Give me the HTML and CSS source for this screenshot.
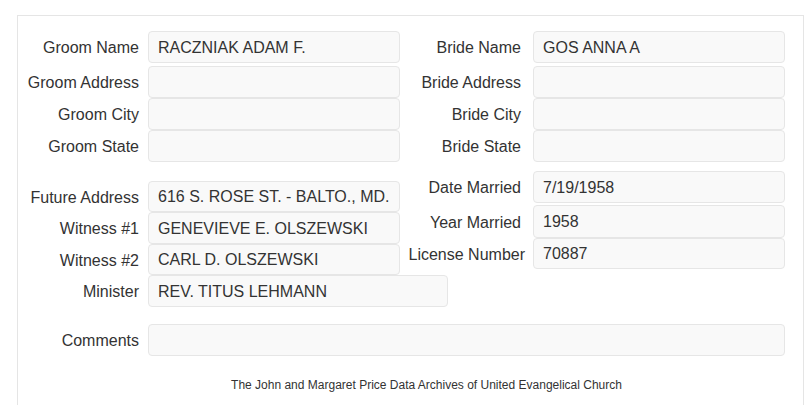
FILE: index.html
```html
<!DOCTYPE html>
<html lang="en">
<head>
<meta charset="utf-8">
<title>Marriage Record</title>
<link rel="stylesheet" href="styles.css">
</head>
<body>
<div class="sheet">
  <div class="section top">
    <div class="col col-left">
      <div class="row first"><div class="label">Groom Name</div><div class="field">RACZNIAK ADAM F.</div></div>
      <div class="row"><div class="label">Groom Address</div><div class="field"></div></div>
      <div class="row"><div class="label">Groom City</div><div class="field"></div></div>
      <div class="row"><div class="label">Groom State</div><div class="field"></div></div>
    </div>
    <div class="col col-right">
      <div class="row first"><div class="label">Bride Name</div><div class="field">GOS ANNA A</div></div>
      <div class="row"><div class="label">Bride Address</div><div class="field"></div></div>
      <div class="row"><div class="label">Bride City</div><div class="field"></div></div>
      <div class="row"><div class="label">Bride State</div><div class="field"></div></div>
    </div>
  </div>
  <div class="section mid">
    <div class="col col-left mid-left">
      <div class="row h31"><div class="label">Future Address</div><div class="field">616 S. ROSE ST. - BALTO., MD.</div></div>
      <div class="row h32"><div class="label">Witness #1</div><div class="field">GENEVIEVE E. OLSZEWSKI</div></div>
      <div class="row h31"><div class="label">Witness #2</div><div class="field">CARL D. OLSZEWSKI</div></div>
      <div class="row h32"><div class="label">Minister</div><div class="field wide">REV. TITUS LEHMANN</div></div>
    </div>
    <div class="col col-right mid-right">
      <div class="row h32 gap2"><div class="label">Date Married</div><div class="field">7/19/1958</div></div>
      <div class="row h33"><div class="label">Year Married</div><div class="field">1958</div></div>
      <div class="row h31"><div class="label tight">License Number</div><div class="field">70887</div></div>
    </div>
  </div>
  <div class="row comments"><div class="label">Comments</div><div class="field full"></div></div>
  <div class="footer">The John and Margaret Price Data Archives of United Evangelical Church</div>
</div>
</body>
</html>
```

FILE: styles.css
```css
html, body {
  margin: 0;
  padding: 0;
  background: #ffffff;
}

.sheet {
  box-sizing: border-box;
  margin: 15px 0 0 17px;
  width: 787px;
  min-height: 400px;
  border: 1px solid #e5e5e5;
  border-bottom: none;
  padding: 15px 0 0 0;
  font-family: "Liberation Sans", Arial, Helvetica, sans-serif;
  color: #333333;
}

.section {
  display: flex;
  align-items: flex-start;
}

.col {
  flex: none;
  display: flex;
  flex-direction: column;
}

.col-left {
  width: 382px;
}

.col-right {
  width: 385px;
}

.row {
  display: flex;
  align-items: center;
  height: 32px;
}

.row.first {
  margin-bottom: 3px;
}

.row.h31 { height: 31px; }
.row.h32 { height: 32px; }
.row.h33 { height: 33px; }
.row.gap2 { margin-bottom: 2px; }

.label {
  flex: none;
  box-sizing: border-box;
  padding-top: 2px;
  text-align: right;
  font-size: 16px;
  white-space: nowrap;
  color: #333333;
}

.col-left .label,
.comments .label {
  width: 130px;
  padding-right: 9px;
}

.col-right .label {
  width: 133px;
  padding-right: 12px;
}

.col-right .label.tight {
  padding-right: 8px;
}

.field {
  flex: none;
  box-sizing: border-box;
  width: 252px;
  height: 100%;
  display: flex;
  align-items: center;
  padding: 1px 9px 0 9px;
  background: #f9f9f9;
  border: 1px solid #e6e6e6;
  border-radius: 4px;
  font-size: 16px;
  color: #333333;
  white-space: nowrap;
}

.field.wide {
  width: 300px;
}

.field.full {
  width: 637px;
}

.mid-left {
  margin-top: 19px;
}

.mid-right {
  margin-top: 9px;
}

.comments {
  margin-top: 17px;
}

.footer {
  margin-top: 22px;
  padding-left: 32px;
  text-align: center;
  font-size: 12px;
  line-height: 14px;
  color: #333333;
}
```
